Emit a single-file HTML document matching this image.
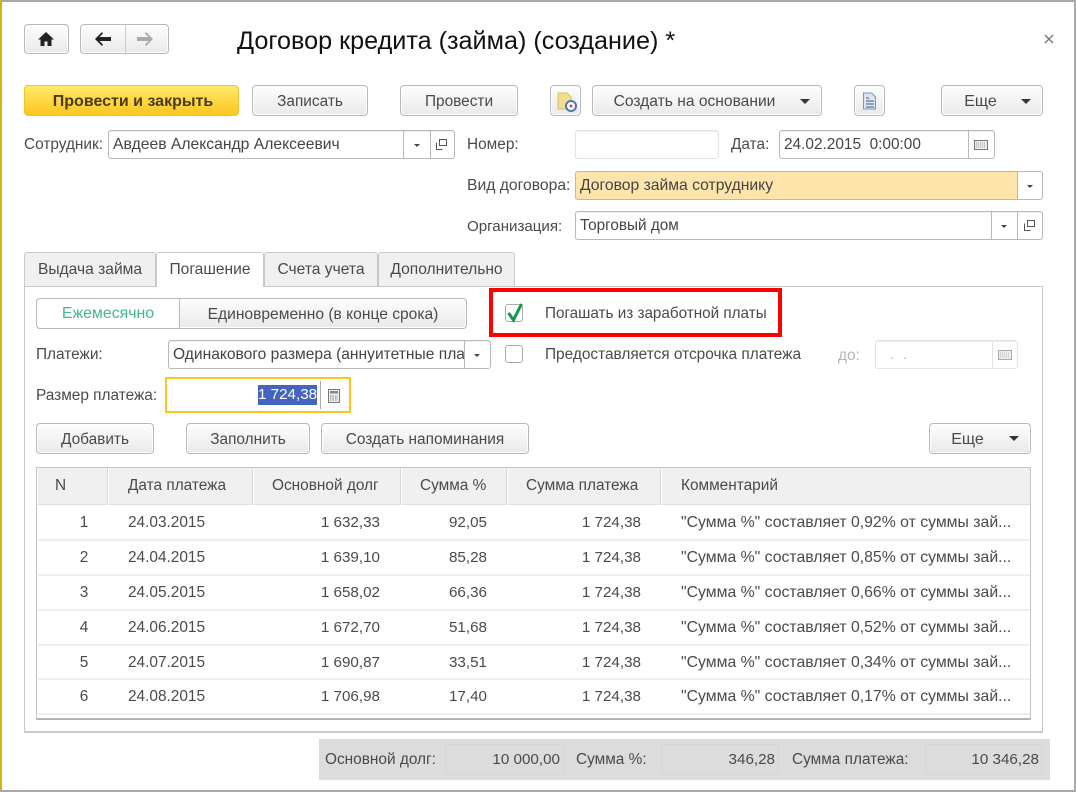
<!DOCTYPE html>
<html lang="ru"><head><meta charset="utf-8"><title>Договор кредита (займа) (создание)</title>
<style>
*{box-sizing:border-box}
html,body{margin:0;padding:0;width:1076px;height:792px;overflow:hidden;background:#fff}
body{position:relative;font-family:"Liberation Sans",Arial,sans-serif;font-size:15.4px;color:#4a4a4a;filter:blur(.3px)}
.a{position:absolute}
.t{position:absolute;white-space:nowrap;height:20px;line-height:20px;margin-top:1px}
.r{text-align:right;font-size:15.2px}
.c{text-align:center}
.k{font-size:15.8px}
.btn{position:absolute;height:31px;border:1px solid #b8b8b8;border-radius:4px;background:linear-gradient(#fdfdfd,#e9e9e9);box-shadow:inset 0 0 0 1px #fff;text-align:center;line-height:31px;color:#4a4a4a;white-space:nowrap}
.f{position:absolute;height:29px;border:1px solid #b8b8b8;border-radius:3px;background:#fff;box-shadow:inset 0 1px 1px #eee;line-height:27px;padding-left:4px;color:#444;white-space:nowrap;overflow:hidden;font-size:15.6px}
.sep{position:absolute;top:0;bottom:0;width:1px;background:#b8b8b8}
.tri{position:absolute;width:0;height:0;border-left:5px solid transparent;border-right:5px solid transparent;border-top:5px solid #333}
.tris{position:absolute;width:0;height:0;border-left:3.5px solid transparent;border-right:3.5px solid transparent;border-top:3.5px solid #444}
.tab{position:absolute;top:252px;height:34px;border:1px solid #c8c8c8;border-bottom:0;border-radius:3px 3px 0 0;background:#f0f0f0;text-align:center;line-height:34px;font-size:15.6px}
.chk{position:absolute;left:505px;width:18px;height:18px;border:1px solid #aaa;border-radius:3px;background:#fff}
.hs{position:absolute;top:468px;width:2px;height:37px;background:#fff;border-left:1px solid #d8d8d8}
.rl{position:absolute;left:38px;width:992px;height:2px;background:#eeeeee}
</style></head><body>
<div class="a" style="left:0;top:0;width:1076px;height:2px;background:#a9a9a9"></div>
<div class="a" style="left:0;top:0;width:2px;height:792px;background:#d4b50f"></div>
<div class="a" style="left:1074px;top:0;width:2px;height:792px;background:#a9a9a9"></div>
<div class="a" style="left:0;top:790px;width:1076px;height:2px;background:#a9a9a9"></div>

<div class="btn" style="left:24px;top:24px;width:45px;height:30px"></div>
<svg class="a" style="left:37px;top:31px" width="18" height="16" viewBox="0 0 18 16"><path d="M9 1L1 8.500h2.500V15h4v-4.500h3V15h4V8.500H17z" fill="#222"/></svg>
<div class="btn" style="left:80px;top:24px;width:89px;height:30px"></div>
<div class="a" style="left:125px;top:25px;width:1px;height:28px;background:#ccc"></div>
<svg class="a" style="left:94px;top:32px" width="18" height="14" viewBox="0 0 18 14"><path d="M8 0L1 7l7 7 1-1.500-3.500-3.500H17V5H5.500L9 1.500z" fill="#222"/></svg>
<svg class="a" style="left:136px;top:32px" width="18" height="14" viewBox="0 0 18 14"><path d="M10 0l7 7-7 7-1-1.500L12.500 9H1V5h11.500L9 1.500z" fill="#aaa"/></svg>
<div class="t" style="left:237px;top:26px;height:28px;line-height:28px;font-size:25.2px;color:#111">Договор кредита (займа) (создание) *</div>
<svg class="a" style="left:1044px;top:34px" width="10" height="10" viewBox="0 0 10 10"><path d="M1 1l8 8M9 1l-8 8" stroke="#777" stroke-width="1.400"/></svg>

<div class="btn" style="left:24px;top:85px;width:215px;border-color:#f2c230;background:linear-gradient(#ffe96a,#fcc520);box-shadow:none;font-weight:bold;font-size:16px;color:#4a3c10;padding-left:3px">Провести и закрыть</div>
<div class="btn" style="left:252px;top:85px;width:116px">Записать</div>
<div class="btn" style="left:400px;top:85px;width:118px">Провести</div>
<div class="btn" style="left:550px;top:85px;width:31px"></div>
<svg class="a" style="left:556px;top:92px" width="22" height="20" viewBox="0 0 22 20"><path d="M2 1h9l4 4v12H2z" fill="#f2dc8e" stroke="#d9bf63"/><circle cx="15" cy="14" r="5" fill="#fff" stroke="#4a78b5" stroke-width="2"/><circle cx="15" cy="14" r="1.500" fill="#b5506a"/></svg>
<div class="btn" style="left:592px;top:85px;width:230px;padding-right:25px;font-size:15.6px">Создать на основании</div>
<div class="tri" style="left:800px;top:99px"></div>
<div class="btn" style="left:854px;top:85px;width:31px"></div>
<svg class="a" style="left:862px;top:92px" width="16" height="18" viewBox="0 0 16 18"><path d="M1.500 1h8l4 4v12h-12z" fill="#dbe6f2" stroke="#7b96b5"/><path d="M4 6h3M4 9h8M4 12h8M4 15h8" stroke="#5a7a9c" stroke-width="1.200"/></svg>
<div class="btn" style="left:941px;top:85px;width:102px;padding-right:23px;font-size:16px">Еще</div>
<div class="tri" style="left:1021px;top:99px"></div>

<div class="t" style="left:24px;top:134px">Сотрудник:</div>
<div class="f" style="left:108px;top:130px;width:347px;font-size:15.7px">Авдеев Александр Алексеевич<div class="sep" style="left:294px"></div><div class="sep" style="left:321px"></div></div>
<div class="tris" style="left:414px;top:144px"></div>
<svg class="a" style="left:436px;top:139px" width="11" height="11" viewBox="0 0 11 11"><path d="M3.500 .5h7v6h-7zM.5 3.500v7h6" fill="none" stroke="#555"/></svg>
<div class="t" style="left:467px;top:134px">Номер:</div>
<div class="f" style="left:575px;top:130px;width:144px;border-color:#e2e2e2"></div>
<div class="t" style="left:731px;top:134px">Дата:</div>
<div class="f" style="left:779px;top:130px;width:216px;font-size:15.4px">24.02.2015&nbsp; 0:00:00<div class="sep" style="left:188px"></div></div>
<svg class="a" style="left:974px;top:140px" width="14" height="10" viewBox="0 0 14 10"><rect x=".5" y=".5" width="13" height="9" fill="#eee" stroke="#777"/><path d="M2 3h10M2 5h10M2 7h10" stroke="#999" stroke-dasharray="1 1"/></svg>

<div class="t" style="left:467px;top:175px;font-size:15.7px">Вид договора:</div>
<div class="f" style="left:575px;top:171px;width:468px;background:linear-gradient(90deg,#ffe5ac 0,#ffe5ac 441px,#fff 441px);box-shadow:none;font-size:15.7px">Договор займа сотруднику<div class="sep" style="left:441px"></div></div>
<div class="tris" style="left:1027px;top:185px"></div>
<div class="t" style="left:467px;top:216px;font-size:15.1px">Организация:</div>
<div class="f" style="left:575px;top:211px;width:468px;font-size:15.3px">Торговый дом<div class="sep" style="left:415px"></div><div class="sep" style="left:441px"></div></div>
<div class="tris" style="left:1001px;top:225px"></div>
<svg class="a" style="left:1024px;top:220px" width="11" height="11" viewBox="0 0 11 11"><path d="M3.500 .5h7v6h-7zM.5 3.500v7h6" fill="none" stroke="#555"/></svg>

<div class="a" style="left:24px;top:286px;width:1019px;height:447px;border:1px solid #c8c8c8;border-bottom:2px solid #c8c8c8"></div>
<div class="tab" style="left:24px;width:132px">Выдача займа</div>
<div class="tab" style="left:156px;width:108px;height:35px;background:#fff;z-index:2">Погашение</div>
<div class="tab" style="left:264px;width:114px">Счета учета</div>
<div class="tab" style="left:378px;width:137px">Дополнительно</div>

<div class="btn" style="left:36px;top:298px;width:431px;padding-left:143px;font-size:15.6px">Единовременно (в конце срока)</div>
<div class="a" style="left:36px;top:298px;width:144px;height:31px;background:#fff;border:1px solid #b8b8b8;border-radius:4px 0 0 4px;text-align:center;line-height:30px;color:#43b88b;font-size:15.9px">Ежемесячно</div>

<div class="a" style="left:489px;top:288px;width:293px;height:49px;border:4px solid #f00"></div>
<div class="chk" style="top:304px"></div>
<svg class="a" style="left:505px;top:302px" width="20" height="21" viewBox="0 0 20 21"><path d="M3.500 11l5 7L16.500 2" fill="none" stroke="#12964a" stroke-width="3"/></svg>
<div class="t" style="left:545px;top:303px;font-size:15.25px">Погашать из заработной платы</div>

<div class="t" style="left:36px;top:344px">Платежи:</div>
<div class="f" style="left:168px;top:340px;width:323px"><span style="display:inline-block;width:291px;overflow:hidden;vertical-align:top">Одинакового размера (аннуитетные плат</span><div class="sep" style="left:295px"></div></div>
<div class="tris" style="left:474px;top:354px"></div>
<div class="chk" style="top:345px"></div>
<div class="t" style="left:545px;top:344px">Предоставляется отсрочка платежа</div>
<div class="t" style="left:838px;top:345px;color:#b5b5b5">до:</div>
<div class="f" style="left:875px;top:340px;width:143px;border-color:#e2e2e2;color:#bbb;padding-left:14px">. &nbsp;.<div class="sep" style="left:116px;background:#e2e2e2"></div></div>
<svg class="a" style="left:998px;top:350px" width="14" height="10" viewBox="0 0 14 10"><rect x=".5" y=".5" width="13" height="9" fill="#eee" stroke="#aaa"/><path d="M2 3h10M2 5h10M2 7h10" stroke="#bbb" stroke-dasharray="1 1"/></svg>

<div class="t" style="left:36px;top:385px">Размер платежа:</div>
<div class="a" style="left:165px;top:377px;width:186px;height:36px;border:2px solid #fbc81e;background:#fff"></div>
<div class="t" style="left:258px;top:384px;width:59px;background:#4464c0;color:#fff;text-align:right;font-size:15.2px">1 724,38</div>
<div class="a" style="left:320px;top:381px;width:1px;height:28px;background:#aaa"></div>
<svg class="a" style="left:328px;top:389px" width="12" height="14" viewBox="0 0 12 14"><rect x=".5" y=".5" width="11" height="13" fill="#eee" stroke="#777"/><rect x="2" y="2" width="8" height="2.500" fill="#888"/><path d="M2 7h8M2 9h8M2 11h8" stroke="#888" stroke-dasharray="1.500 1"/></svg>

<div class="btn" style="left:36px;top:423px;width:118px">Добавить</div>
<div class="btn" style="left:186px;top:423px;width:124px">Заполнить</div>
<div class="btn" style="left:321px;top:423px;width:208px">Создать напоминания</div>
<div class="btn" style="left:929px;top:423px;width:102px;padding-right:25px;font-size:16px">Еще</div>
<div class="tri" style="left:1009px;top:436px"></div>

<div class="a" style="left:36px;top:467px;width:995px;height:253px;border:1px solid #c4c4c4;border-bottom:2px solid #b4b4b4;background:#fff"></div>
<div class="a" style="left:38px;top:468px;width:992px;height:37px;background:#f0f0f0;border-bottom:1px solid #ddd"></div>
<div class="hs" style="left:107px"></div><div class="hs" style="left:252px"></div><div class="hs" style="left:400px"></div><div class="hs" style="left:506px"></div><div class="hs" style="left:660px"></div>
<div class="t" style="left:55px;top:475px">N</div>
<div class="t" style="left:128px;top:475px">Дата платежа</div>
<div class="t" style="left:272px;top:475px">Основной долг</div>
<div class="t" style="left:420px;top:475px">Сумма %</div>
<div class="t" style="left:526px;top:475px">Сумма платежа</div>
<div class="t" style="left:681px;top:475px">Комментарий</div>

<div class="rl" style="top:539px"></div><div class="rl" style="top:574px"></div><div class="rl" style="top:609px"></div><div class="rl" style="top:644px"></div><div class="rl" style="top:678px"></div><div class="rl" style="top:713px"></div>

<div class="t c" style="left:74px;top:512px;width:20px">1</div><div class="t" style="left:128px;top:512px">24.03.2015</div><div class="t r" style="left:280px;top:512px;width:100px">1 632,33</div><div class="t r" style="left:407px;top:512px;width:80px">92,05</div><div class="t r" style="left:541px;top:512px;width:100px">1 724,38</div><div class="t k" style="left:681px;top:512px">"Сумма %" составляет 0,92% от суммы зай...</div>
<div class="t c" style="left:74px;top:547px;width:20px">2</div><div class="t" style="left:128px;top:547px">24.04.2015</div><div class="t r" style="left:280px;top:547px;width:100px">1 639,10</div><div class="t r" style="left:407px;top:547px;width:80px">85,28</div><div class="t r" style="left:541px;top:547px;width:100px">1 724,38</div><div class="t k" style="left:681px;top:547px">"Сумма %" составляет 0,85% от суммы зай...</div>
<div class="t c" style="left:74px;top:582px;width:20px">3</div><div class="t" style="left:128px;top:582px">24.05.2015</div><div class="t r" style="left:280px;top:582px;width:100px">1 658,02</div><div class="t r" style="left:407px;top:582px;width:80px">66,36</div><div class="t r" style="left:541px;top:582px;width:100px">1 724,38</div><div class="t k" style="left:681px;top:582px">"Сумма %" составляет 0,66% от суммы зай...</div>
<div class="t c" style="left:74px;top:617px;width:20px">4</div><div class="t" style="left:128px;top:617px">24.06.2015</div><div class="t r" style="left:280px;top:617px;width:100px">1 672,70</div><div class="t r" style="left:407px;top:617px;width:80px">51,68</div><div class="t r" style="left:541px;top:617px;width:100px">1 724,38</div><div class="t k" style="left:681px;top:617px">"Сумма %" составляет 0,52% от суммы зай...</div>
<div class="t c" style="left:74px;top:652px;width:20px">5</div><div class="t" style="left:128px;top:652px">24.07.2015</div><div class="t r" style="left:280px;top:652px;width:100px">1 690,87</div><div class="t r" style="left:407px;top:652px;width:80px">33,51</div><div class="t r" style="left:541px;top:652px;width:100px">1 724,38</div><div class="t k" style="left:681px;top:652px">"Сумма %" составляет 0,34% от суммы зай...</div>
<div class="t c" style="left:74px;top:686px;width:20px">6</div><div class="t" style="left:128px;top:686px">24.08.2015</div><div class="t r" style="left:280px;top:686px;width:100px">1 706,98</div><div class="t r" style="left:407px;top:686px;width:80px">17,40</div><div class="t r" style="left:541px;top:686px;width:100px">1 724,38</div><div class="t k" style="left:681px;top:686px">"Сумма %" составляет 0,17% от суммы зай...</div>

<div class="a" style="left:319px;top:739px;width:731px;height:41px;background:#dcdcdc"></div>
<div class="a" style="left:445px;top:744px;width:119px;height:31px;border:1px solid #d6d6d6"></div>
<div class="a" style="left:661px;top:744px;width:118px;height:31px;border:1px solid #d6d6d6"></div>
<div class="a" style="left:925px;top:744px;width:117px;height:31px;border:1px solid #d6d6d6"></div>
<div class="t" style="left:325px;top:749px">Основной долг:</div>
<div class="t r" style="left:460px;top:749px;width:100px">10 000,00</div>
<div class="t" style="left:576px;top:749px">Сумма %:</div>
<div class="t r" style="left:675px;top:749px;width:100px">346,28</div>
<div class="t" style="left:792px;top:749px">Сумма платежа:</div>
<div class="t r" style="left:939px;top:749px;width:100px">10 346,28</div>
</body></html>
